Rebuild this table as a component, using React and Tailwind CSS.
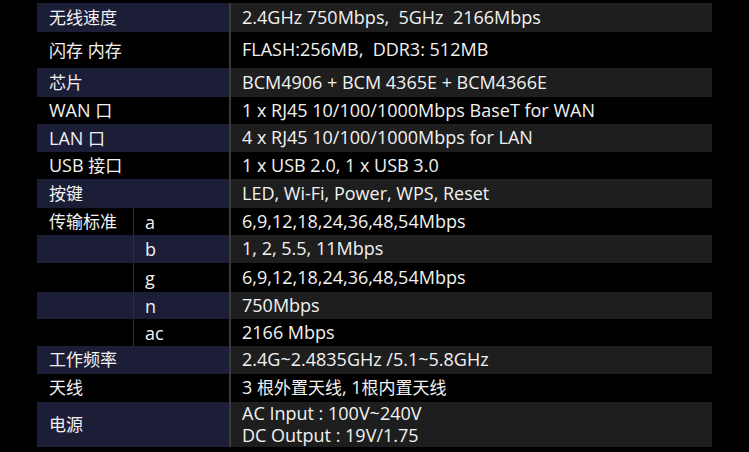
import React from "react";

const rows = [
  { l: "无线速度", r: ["2.4GHz 750Mbps,\u00a0\u00a05GHz\u00a0\u00a02166Mbps"], h: "h-[29px]" },
  { l: "闪存 内存", r: ["FLASH:256MB,\u00a0\u00a0DDR3: 512MB"], h: "h-[36px]" },
  { l: "芯片", r: ["BCM4906 + BCM 4365E + BCM4366E"], h: "h-[29px]" },
  { l: "WAN 口", r: ["1 x RJ45 10/100/1000Mbps BaseT for WAN"], h: "h-[27px]" },
  { l: "LAN 口", r: ["4 x RJ45 10/100/1000Mbps for LAN"], h: "h-[28px]" },
  { l: "USB 接口", r: ["1 x USB 2.0, 1 x USB 3.0"], h: "h-[27px]" },
  { l: "按键", r: ["LED, Wi-Fi, Power, WPS, Reset"], h: "h-[29px]" },
  { l: "传输标准", s: "a", r: ["6,9,12,18,24,36,48,54Mbps"], h: "h-[27px]" },
  { l: "", s: "b", r: ["1, 2, 5.5, 11Mbps"], h: "h-[28px]" },
  { l: "", s: "g", r: ["6,9,12,18,24,36,48,54Mbps"], h: "h-[29px]" },
  { l: "", s: "n", r: ["750Mbps"], h: "h-[27px]" },
  { l: "", s: "ac", r: ["2166 Mbps"], h: "h-[27px]" },
  { l: "工作频率", r: ["2.4G~2.4835GHz /5.1~5.8GHz"], h: "h-[28px]" },
  { l: "天线", r: ["3 根外置天线, 1根内置天线"], h: "h-[28px]" },
  { l: "电源", r: ["AC Input : 100V~240V", "DC Output : 19V/1.75"], h: "h-[45px]" },
];

function Mixed({ text }) {
  const parts = text.match(/[\u0000-\u024F\u00a0]+|[^\u0000-\u024F\u00a0]+/g) || [];
  return (
    <div className="whitespace-pre">
      {parts.map((p, i) =>
        /[^\u0000-\u024F\u00a0]/.test(p) ? (
          <span key={i} className="text-[17px]">{p}</span>
        ) : (
          <span key={i} className="text-[18px]">{p}</span>
        )
      )}
    </div>
  );
}

export default function App() {
  return (
    <div
      className="w-[749px] h-[452px] bg-black pt-[3px] pl-[37px] text-[#f2f2f2]"
      style={{ fontFamily: '"Open Sans", "Noto Sans CJK SC", sans-serif' }}
    >
      <div className="w-[675px] flex flex-col">
        {rows.map((row, i) => {
          const odd = i % 2 === 0;
          const left = odd ? "bg-[#1c1d37]" : "bg-black";
          const right = odd ? "bg-[#1e1e1e]" : "bg-black";
          const hasSub = row.s !== undefined;
          return (
            <div key={i} className={`flex ${row.h}`}>
              {hasSub ? (
                <div className={`w-[192px] flex ${left}`}>
                  <div className="w-[96px] flex items-center pl-[12px] leading-[22px] whitespace-nowrap">
                    <Mixed text={row.l} />
                  </div>
                  <div className="w-[1px] bg-[#2c2c3a]" />
                  <div className="flex-1 flex items-center pl-[11px] text-[18px] leading-[22px]">{row.s}</div>
                </div>
              ) : (
                <div className={`w-[192px] flex items-center pl-[12px] leading-[22px] whitespace-nowrap ${left}`}>
                  <Mixed text={row.l} />
                </div>
              )}
              <div className="w-[2px] bg-[#3a3a3a]" />
              <div
                className={`flex-1 flex flex-col justify-center pl-[11px] leading-[21px] whitespace-nowrap ${right}`}
              >
                {row.r.map((t, k) => (
                  <Mixed key={k} text={t} />
                ))}
              </div>
            </div>
          );
        })}
      </div>
    </div>
  );
}
